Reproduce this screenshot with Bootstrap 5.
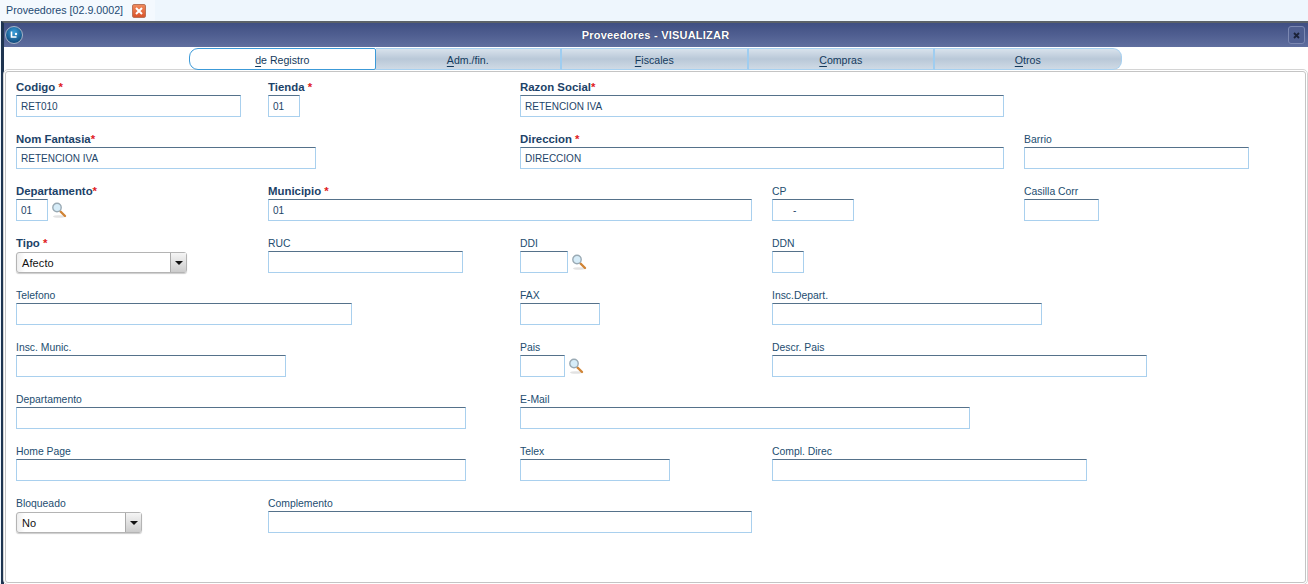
<!DOCTYPE html>
<html lang="es"><head><meta charset="utf-8"><title>Proveedores</title>
<link href="https://cdn.jsdelivr.net/npm/bootstrap@5.3.0/dist/css/bootstrap.min.css" rel="stylesheet">
<style>
html,body{height:584px;overflow:hidden;background:#eef6fd;}
body{font-family:"Liberation Sans",Arial,sans-serif;font-size:10px;color:#1f4468;}
.top-strip{height:21px;background:#eef6fd;}
.doc-tab{width:155px;height:21px;background:#f4f9fe;padding-left:6px;font-size:10.7px;color:#1d4a72;gap:9px;}
.doc-close{width:14px;height:14px;background:linear-gradient(#f08a5c,#d9532b);border:1px solid #b9745a;border-radius:2px;}
.win{height:563px;border:2px solid #1e3450;border-left-width:3px;border-right:0;border-bottom:0;margin-left:1px;background:#fff;border-top-color:#5c6268;}
.win-title{height:24px;background:linear-gradient(#3f4e82,#606f9f);color:#fff;font-weight:700;font-size:11px;padding:0 2px 0 1px;}
.win-title-text{text-shadow:0 0 1px #1c2444;letter-spacing:.22px;}
.win-logo{width:18px;height:18px;}
.win-x{width:17px;height:18px;border:1px solid #7c88b2;border-radius:3px;background:#4f5e90;margin-right:1px;}
.tab-line{height:22px;padding-left:185px;margin-top:1px;position:relative;z-index:1;}
.sec-tab{width:186.5px;height:22px;background:linear-gradient(#d8e2ec,#b9c8d8 50%,#cfdae5);border:1px solid #a6d0f0;border-left-width:0;border-right:2px solid #9fcdf0;font-size:10.6px;color:#143a5c;padding-top:3px;}
.sec-tab u{text-underline-offset:2px;}
.sec-tab.is-on{background:#fff;border:1px solid #3c9ad8;border-radius:9px 2px 2px 9px;color:#143a5c;}
.sec-tab.is-last{border-radius:0 9px 9px 0;border-right:1px solid #a6d0f0;}
.panel{height:512px;border:1px solid #c4c4c4;outline:1px solid #d4d4d4;outline-offset:1px;margin:1px 2px 0 1px;border-radius:3px;padding:4px 0 0 10px;position:relative;}
.form-area{display:grid;grid-template-columns:repeat(5,252px);grid-auto-rows:52px;}
.fld{min-width:0;}
.fld-label{height:14px;line-height:14px;font-size:10.4px;color:#234d70;white-space:nowrap;margin-top:5px;}
.fld-label.req{font-size:11.4px;font-weight:700;color:#1c4268;height:15px;margin-top:4px;}
.req i{color:#e01b24;font-style:normal;}
.tbox{height:22px;padding:0 3px 0 4px;line-height:21px;font-size:10px;color:#1d4468;background:#fff;border:1px solid #a9d0ee;border-top-color:#55718a;white-space:nowrap;overflow:hidden;}
.cp-mask{padding-left:16px;}
.combo{height:21px;margin-top:1px;border:1px solid #b4b4b4;border-radius:3px;background:linear-gradient(90deg,#eee,#fff 8px);padding-left:5px;font-size:11px;letter-spacing:.1px;color:#111;box-shadow:0 1px 1px #ccc;}
.combo-text{padding-top:1px;}
.combo-arrow{width:16px;height:100%;border-left:1px solid #aaa;background:linear-gradient(#f5f5f5,#ccc);}
.arrow-glyph{width:0;height:0;border:4px solid transparent;border-top:4px solid #111;border-bottom:0;}
.s2{grid-column:span 2;}.s3{grid-column:span 3;}
.w32{width:32px}.w45{width:45px}.w48{width:48px}.w75{width:75px}.w80{width:80px}.w82{width:82px}.w126{width:126px}.w150{width:150px}.w171{width:171px}.w195{width:195px}.w225{width:225px}.w270{width:270px}.w300{width:300px}.w315{width:315px}.w336{width:336px}.w375{width:375px}.w450{width:450px}.w484{width:484px}
.lens{width:16px;height:18px;margin-left:3px;}
</style></head><body>
<div class="top-strip"><div class="doc-tab d-flex align-items-center"><span>Proveedores [02.9.0002]</span>
<span class="doc-close d-flex align-items-center justify-content-center"><svg width="8" height="8" viewBox="0 0 8 8"><path d="M1 1L7 7M7 1L1 7" stroke="#fff" stroke-width="2"/></svg></span></div></div>
<div class="win">
<div class="win-title d-flex align-items-center justify-content-between">
<svg class="win-logo" viewBox="0 0 18 18"><defs><radialGradient id="orb" cx=".5" cy=".35" r=".7"><stop offset="0" stop-color="#3aa0dc"/><stop offset="1" stop-color="#0c3f70"/></radialGradient></defs><circle cx="9" cy="9" r="8.5" fill="url(#orb)" stroke="#a8b4c8"/><path d="M6.5 5.5V11H11.5" fill="none" stroke="#fff" stroke-width="1.6"/><circle cx="11" cy="8" r="1.2" fill="#fff"/></svg>
<span class="win-title-text">Proveedores - VISUALIZAR</span>
<span class="win-x d-flex align-items-center justify-content-center"><svg width="7" height="7" viewBox="0 0 7 7"><path d="M1 1L6 6M6 1L1 6" stroke="#1b2238" stroke-width="1.8"/></svg></span>
</div>
<div class="tab-line d-flex">
<div class="sec-tab is-on d-flex align-items-center justify-content-center"><span><u>d</u>e Registro</span></div>
<div class="sec-tab d-flex align-items-center justify-content-center"><span><u>A</u>dm./fin.</span></div>
<div class="sec-tab d-flex align-items-center justify-content-center"><span><u>F</u>iscales</span></div>
<div class="sec-tab d-flex align-items-center justify-content-center"><span><u>C</u>ompras</span></div>
<div class="sec-tab is-last d-flex align-items-center justify-content-center"><span><u>O</u>tros</span></div>
</div>
<div class="panel">
<div class="form-area">
<div class="fld"><div class="fld-label req">Codigo <i>*</i></div><div class="tbox w225">RET010</div></div>
<div class="fld"><div class="fld-label req">Tienda <i>*</i></div><div class="tbox w32">01</div></div>
<div class="fld s3"><div class="fld-label req">Razon Social<i>*</i></div><div class="tbox w484">RETENCION IVA</div></div>

<div class="fld s2"><div class="fld-label req">Nom Fantasia<i>*</i></div><div class="tbox w300">RETENCION IVA</div></div>
<div class="fld s2"><div class="fld-label req">Direccion <i>*</i></div><div class="tbox w484">DIRECCION</div></div>
<div class="fld"><div class="fld-label">Barrio</div><div class="tbox w225"></div></div>

<div class="fld"><div class="fld-label req">Departamento<i>*</i></div><div class="d-flex align-items-center"><div class="tbox w32">01</div><svg class="lens" viewBox="0 0 16 18"><use href="#lensdef"/></svg></div></div>
<div class="fld s2"><div class="fld-label req">Municipio <i>*</i></div><div class="tbox w484">01</div></div>
<div class="fld"><div class="fld-label">CP</div><div class="tbox w82"><span class="cp-mask">-</span></div></div>
<div class="fld"><div class="fld-label">Casilla Corr</div><div class="tbox w75"></div></div>

<div class="fld"><div class="fld-label req">Tipo <i>*</i></div><div class="combo w171 d-flex align-items-center justify-content-between"><span class="combo-text">Afecto</span><span class="combo-arrow d-flex align-items-center justify-content-center"><span class="arrow-glyph"></span></span></div></div>
<div class="fld"><div class="fld-label">RUC</div><div class="tbox w195"></div></div>
<div class="fld"><div class="fld-label">DDI</div><div class="d-flex align-items-center"><div class="tbox w48"></div><svg class="lens" viewBox="0 0 16 18"><use href="#lensdef"/></svg></div></div>
<div class="fld s2"><div class="fld-label">DDN</div><div class="tbox w32"></div></div>

<div class="fld s2"><div class="fld-label">Telefono</div><div class="tbox w336"></div></div>
<div class="fld"><div class="fld-label">FAX</div><div class="tbox w80"></div></div>
<div class="fld s2"><div class="fld-label">Insc.Depart.</div><div class="tbox w270"></div></div>

<div class="fld s2"><div class="fld-label">Insc. Munic.</div><div class="tbox w270"></div></div>
<div class="fld"><div class="fld-label">Pais</div><div class="d-flex align-items-center"><div class="tbox w45"></div><svg class="lens" viewBox="0 0 16 18"><use href="#lensdef"/></svg></div></div>
<div class="fld s2"><div class="fld-label">Descr. Pais</div><div class="tbox w375"></div></div>

<div class="fld s2"><div class="fld-label">Departamento</div><div class="tbox w450"></div></div>
<div class="fld s3"><div class="fld-label">E-Mail</div><div class="tbox w450"></div></div>

<div class="fld s2"><div class="fld-label">Home Page</div><div class="tbox w450"></div></div>
<div class="fld"><div class="fld-label">Telex</div><div class="tbox w150"></div></div>
<div class="fld s2"><div class="fld-label">Compl. Direc</div><div class="tbox w315"></div></div>

<div class="fld"><div class="fld-label">Bloqueado</div><div class="combo w126 d-flex align-items-center justify-content-between"><span class="combo-text">No</span><span class="combo-arrow d-flex align-items-center justify-content-center"><span class="arrow-glyph"></span></span></div></div>
<div class="fld s3"><div class="fld-label">Complemento</div><div class="tbox w484"></div></div>
</div>
</div>
</div>
<svg width="0" height="0" class="d-block"><defs><g id="lensdef"><ellipse cx="8" cy="15.5" rx="6" ry="1.3" fill="#e2e2e2"/><path d="M9.5 10.5L14 15" stroke="#d08436" stroke-width="2.4" stroke-linecap="round"/><circle cx="6" cy="6.5" r="4.2" fill="#d6ecf8" stroke="#9aaab4" stroke-width="1.4"/></g></defs></svg>
<script src="https://cdn.jsdelivr.net/npm/bootstrap@5.3.0/dist/js/bootstrap.bundle.min.js"></script>
</body></html>
